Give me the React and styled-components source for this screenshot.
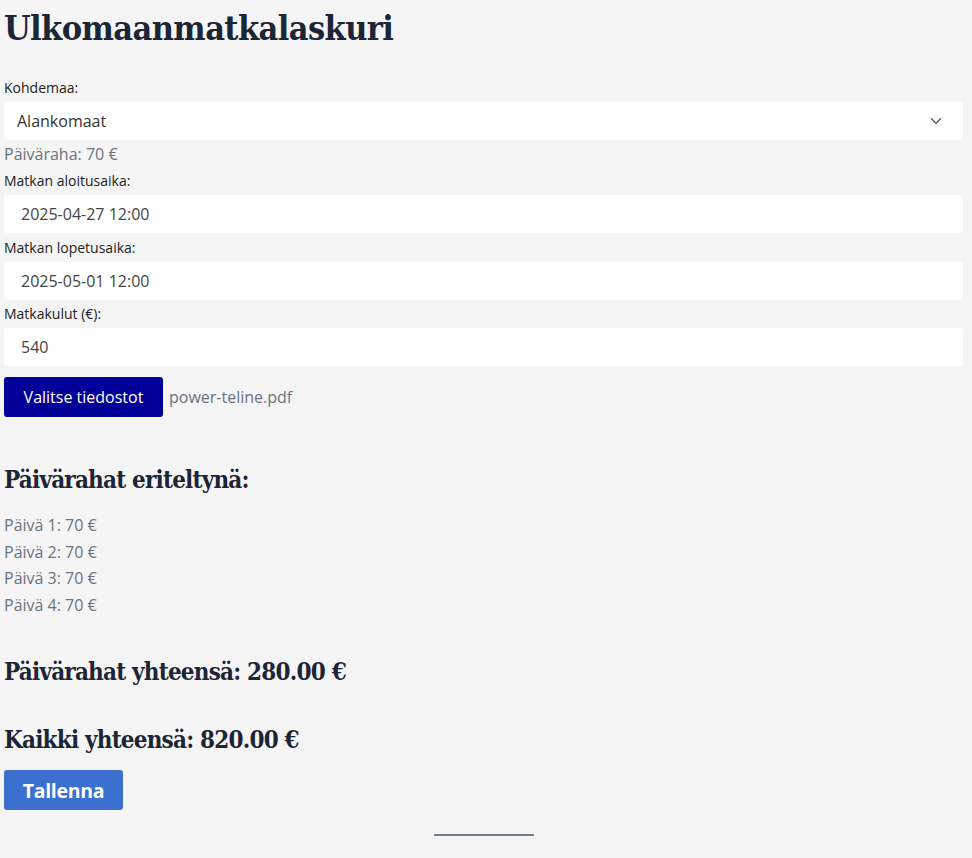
import React from "react";
import styled, { createGlobalStyle } from "styled-components";

const Global = createGlobalStyle`
  html, body { margin: 0; padding: 0; background: #f5f5f5; }
  body { font-family: "Open Sans", "Noto Sans", sans-serif; color: #1f2937; }
  * { box-sizing: border-box; }
`;

const Page = styled.div`
  width: 959px;
  margin-left: 4px;
  display: flex;
  flex-direction: column;
`;

const serif = `"DejaVu Serif", "Liberation Serif", serif`;

const Title = styled.h1`
  font-family: ${serif};
  font-stretch: condensed;
  font-weight: 700;
  font-size: 34px;
  line-height: 48px;
  letter-spacing: -0.6px;
  color: #1c2536;
  margin: 4px 0 26px;
`;

const Heading = styled.h2`
  font-family: ${serif};
  font-stretch: condensed;
  font-weight: 700;
  font-size: 24px;
  line-height: 34px;
  letter-spacing: -0.8px;
  color: #1c2536;
  margin: ${(p) => p.$m || "0"};
`;

const Field = styled.div`
  display: flex;
  flex-direction: column;
  gap: 4px;
  margin-top: ${(p) => p.$mt || "0"};
  margin-bottom: ${(p) => p.$mb || "5px"};
`;

const Label = styled.label`
  font-size: 14px;
  line-height: 20px;
  color: #222;
`;

const SelectBox = styled.div`
  height: 38px;
  background: #fff;
  border-radius: 3px;
  display: flex;
  align-items: center;
  justify-content: space-between;
  padding: 0 18px 0 13px;
  font-size: 16px;
  color: #333;
`;

const InputBox = styled.div`
  height: 38px;
  background: #fff;
  border-radius: 3px;
  display: flex;
  align-items: center;
  padding: 0 17px;
  font-size: 16px;
  color: #444;
`;

const Muted = styled.div`
  font-size: 16px;
  line-height: 20px;
  color: #6b7280;
`;

const FileRow = styled.div`
  display: flex;
  align-items: center;
  gap: 6px;
  margin-top: 7px;
`;

const FileButton = styled.button`
  height: 40px;
  width: 159px;
  background: #000099;
  color: #fff;
  border: none;
  border-radius: 3px;
  font-family: inherit;
  font-size: 16px;
  padding: 0;
`;

const DayList = styled.div`
  display: flex;
  flex-direction: column;
`;

const Day = styled.div`
  font-size: 16px;
  line-height: 26.6px;
  color: #6b7280;
`;

const SaveButton = styled.button`
  height: 40px;
  width: 119px;
  background: #3b6fd0;
  color: #fff;
  border: none;
  border-radius: 3px;
  font-family: inherit;
  font-size: 19.5px;
  font-weight: 700;
  letter-spacing: -0.3px;
  padding: 0;
  align-self: flex-start;
`;

const Divider = styled.div`
  width: 100px;
  height: 2px;
  background: #6b7a90;
  align-self: center;
  margin-top: 24px;
`;

const Chevron = () => (
  <svg width="18" height="18" viewBox="0 0 24 24" fill="none" stroke="#5b6475" strokeWidth="2" strokeLinecap="round" strokeLinejoin="round">
    <path d="m6 9 6 6 6-6" />
  </svg>
);

export default function App() {
  const days = [1, 2, 3, 4];
  return (
    <>
      <Global />
      <Page>
        <Title>Ulkomaanmatkalaskuri</Title>
        <Field $mb="4px">
          <Label>Kohdemaa:</Label>
          <SelectBox>
            <span>Alankomaat</span>
            <Chevron />
          </SelectBox>
        </Field>
        <Muted>Päiväraha: 70 €</Muted>
        <Field $mt="7px">
          <Label>Matkan aloitusaika:</Label>
          <InputBox>2025-04-27 12:00</InputBox>
        </Field>
        <Field $mb="4px">
          <Label>Matkan lopetusaika:</Label>
          <InputBox>2025-05-01 12:00</InputBox>
        </Field>
        <Field $mb="4px">
          <Label>Matkakulut (€):</Label>
          <InputBox>540</InputBox>
        </Field>
        <FileRow>
          <FileButton>Valitse tiedostot</FileButton>
          <Muted>power-teline.pdf</Muted>
        </FileRow>
        <Heading $m="46px 0 15px">Päivärahat eriteltynä:</Heading>
        <DayList>
          {days.map((d) => (
            <Day key={d}>Päivä {d}: 70 €</Day>
          ))}
        </DayList>
        <Heading $m="37px 0 0">Päivärahat yhteensä: 280.00 €</Heading>
        <Heading $m="34px 0 13px">Kaikki yhteensä: 820.00 €</Heading>
        <SaveButton>Tallenna</SaveButton>
        <Divider />
      </Page>
    </>
  );
}
